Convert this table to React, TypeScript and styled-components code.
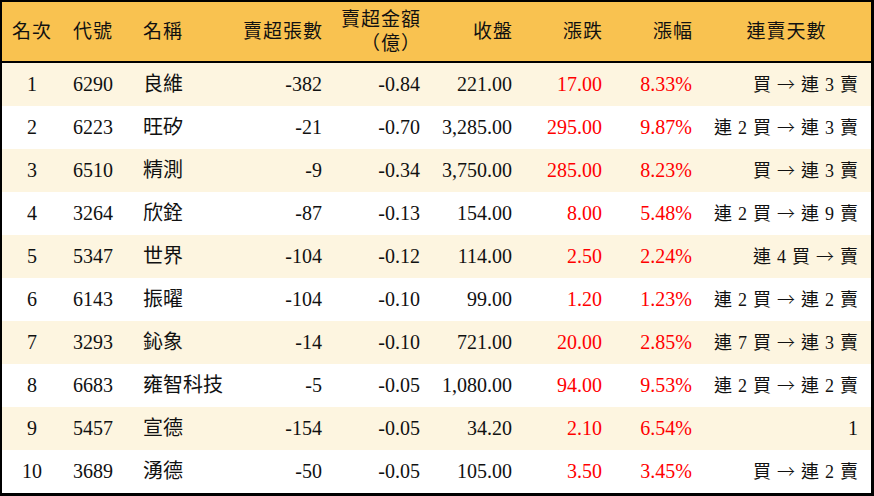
import React from 'react'
import styled, { createGlobalStyle } from 'styled-components'

const GlobalStyle = createGlobalStyle`
  html, body {
    margin: 0;
    padding: 0;
    background: #ffffff;
  }
  body {
    font-family: "Liberation Serif", "Noto Sans CJK TC", serif;
    color: #111111;
  }
`

const COLUMNS = '60px 70px 108px 92px 98px 92px 90px 90px 169px'

const Board = styled.div`
  width: 874px;
  height: 496px;
  box-sizing: border-box;
  border: 2px solid #000000;
  border-right-width: 3px;
  border-bottom-width: 3px;
  display: flex;
  flex-direction: column;
`

const HeaderRow = styled.div`
  display: grid;
  grid-template-columns: ${COLUMNS};
  height: 59px;
  background: #f9c250;
  border-bottom: 2px solid #000000;
  font-size: 19px;
  letter-spacing: 1px;
`

const Row = styled.div<{ $shade: boolean }>`
  display: grid;
  grid-template-columns: ${COLUMNS};
  height: 43px;
  background: ${(p) => (p.$shade ? '#fdf5e0' : '#ffffff')};
  font-size: 20px;
`

const Cell = styled.div<{ $align: 'left' | 'center' | 'right'; $red?: boolean; $pad?: number }>`
  display: flex;
  flex-direction: column;
  justify-content: center;
  align-items: ${(p) => (p.$align === 'left' ? 'flex-start' : p.$align === 'right' ? 'flex-end' : 'center')};
  text-align: ${(p) => p.$align};
  padding-left: ${(p) => (p.$align === 'left' ? p.$pad ?? 11 : 0)}px;
  padding-right: ${(p) => (p.$align === 'right' ? p.$pad ?? 10 : 0)}px;
  color: ${(p) => (p.$red ? '#ff0000' : '#111111')};
  white-space: pre;
  line-height: 1.25;
`

const Streak = styled.span`
  font-size: 18px;
  white-space: pre;
  word-spacing: 1.5px;
`

const Arrow = styled.span`
  font-family: "Noto Sans CJK TC", sans-serif;
  font-weight: 300;
`

type Stock = {
  rank: string
  code: string
  name: string
  lots: string
  amount: string
  close: string
  change: string
  pct: string
  streak: string
}

const rows: Stock[] = [
  { rank: '1', code: '6290', name: '良維', lots: '-382', amount: '-0.84', close: '221.00', change: '17.00', pct: '8.33%', streak: '買 → 連 3 賣' },
  { rank: '2', code: '6223', name: '旺矽', lots: '-21', amount: '-0.70', close: '3,285.00', change: '295.00', pct: '9.87%', streak: '連 2 買 → 連 3 賣' },
  { rank: '3', code: '6510', name: '精測', lots: '-9', amount: '-0.34', close: '3,750.00', change: '285.00', pct: '8.23%', streak: '買 → 連 3 賣' },
  { rank: '4', code: '3264', name: '欣銓', lots: '-87', amount: '-0.13', close: '154.00', change: '8.00', pct: '5.48%', streak: '連 2 買 → 連 9 賣' },
  { rank: '5', code: '5347', name: '世界', lots: '-104', amount: '-0.12', close: '114.00', change: '2.50', pct: '2.24%', streak: '連 4 買 → 賣' },
  { rank: '6', code: '6143', name: '振曜', lots: '-104', amount: '-0.10', close: '99.00', change: '1.20', pct: '1.23%', streak: '連 2 買 → 連 2 賣' },
  { rank: '7', code: '3293', name: '鈊象', lots: '-14', amount: '-0.10', close: '721.00', change: '20.00', pct: '2.85%', streak: '連 7 買 → 連 3 賣' },
  { rank: '8', code: '6683', name: '雍智科技', lots: '-5', amount: '-0.05', close: '1,080.00', change: '94.00', pct: '9.53%', streak: '連 2 買 → 連 2 賣' },
  { rank: '9', code: '5457', name: '宣德', lots: '-154', amount: '-0.05', close: '34.20', change: '2.10', pct: '6.54%', streak: '1' },
  { rank: '10', code: '3689', name: '湧德', lots: '-50', amount: '-0.05', close: '105.00', change: '3.50', pct: '3.45%', streak: '買 → 連 2 賣' },
]

// split the streak text so the arrow can use the full-width CJK glyph
const renderStreak = (text: string) => {
  if (!text.includes('→')) return text
  const [from, to] = text.split('→')
  return (
    <Streak>
      {from}
      <Arrow>→</Arrow>
      {to}
    </Streak>
  )
}

export default function App() {
  return (
    <>
      <GlobalStyle />
      <Board>
        <HeaderRow>
          <Cell $align="center">名次</Cell>
          <Cell $align="left">代號</Cell>
          <Cell $align="left">名稱</Cell>
          <Cell $align="right" $pad={9}>賣超張數</Cell>
          <Cell $align="right" $pad={9}>
            <span>賣超金額</span>
            <span>（億）</span>
          </Cell>
          <Cell $align="right" $pad={9}>收盤</Cell>
          <Cell $align="right" $pad={9}>漲跌</Cell>
          <Cell $align="right" $pad={9}>漲幅</Cell>
          <Cell $align="center">連賣天數</Cell>
        </HeaderRow>
        {rows.map((r, i) => (
          <Row key={r.code} $shade={i % 2 === 0}>
            <Cell $align="center">{r.rank}</Cell>
            <Cell $align="left">{r.code}</Cell>
            <Cell $align="left">{r.name}</Cell>
            <Cell $align="right">{r.lots}</Cell>
            <Cell $align="right">{r.amount}</Cell>
            <Cell $align="right">{r.close}</Cell>
            <Cell $align="right" $red>{r.change}</Cell>
            <Cell $align="right" $red>{r.pct}</Cell>
            <Cell $align="right" $pad={13}>{renderStreak(r.streak)}</Cell>
          </Row>
        ))}
      </Board>
    </>
  )
}
